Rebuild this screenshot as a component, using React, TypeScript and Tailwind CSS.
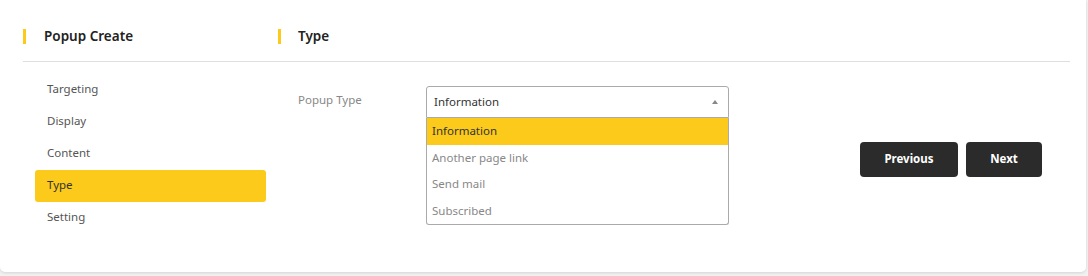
import { useState } from "react"

const steps = ["Targeting", "Display", "Content", "Type", "Setting"]
const options = ["Information", "Another page link", "Send mail", "Subscribed"]

export default function App() {
  const [active] = useState("Type")
  const [value] = useState("Information")

  return (
    <div className="h-[276px] w-[1088px] bg-[#f1f1f1] font-['Noto_Sans',sans-serif]">
      <div className="h-[272px] w-[1086px] rounded-b-[5px] bg-white pl-[23px] pr-[16px] shadow-[0_1px_3px_rgba(0,0,0,0.12)]">
        {/* Header */}
        <div className="flex h-[62px] border-b border-[#dedede] pt-[25px]">
          <div className="flex h-[22px] w-[255px] items-center">
            <span className="h-[15px] w-[3px] bg-[#fcca1a]" />
            <h2 className="ml-[18px] text-[13.5px] font-semibold text-[#222]">Popup Create</h2>
          </div>
          <div className="flex h-[22px] items-center">
            <span className="h-[15px] w-[3px] bg-[#fcca1a]" />
            <h2 className="ml-[17px] text-[13.5px] font-semibold text-[#222]">Type</h2>
          </div>
        </div>

        {/* Body */}
        <div className="flex">
          <ul className="ml-[12px] mt-[12px] w-[243px] pr-[12px]">
            {steps.map((step) => (
              <li
                key={step}
                className={`flex h-[32px] items-center rounded-[3px] px-[12px] pb-[2px] text-[11.5px] ${
                  step === active ? "bg-[#fcca1a] text-[#333]" : "text-[#555]"
                }`}
              >
                {step}
              </li>
            ))}
          </ul>

          <div className="flex flex-1 pl-[20px] pt-[24px]">
            <label className="w-[128px] pt-[6px] text-[11.5px] leading-4 text-[#888]">Popup Type</label>

            <div className="relative h-[32px] w-[303px]">
              <div className="flex h-[32px] items-center justify-between rounded-t-[3px] border border-[#aaa] pl-[7px] pr-[10px] text-[11.5px] text-[#333]">
                <span>{value}</span>
                <span className="mt-[-1px] h-0 w-0 border-x-[3.5px] border-b-[4px] border-x-transparent border-b-[#888]" />
              </div>
              <ul className="absolute left-0 top-full w-full rounded-b-[3px] border border-t-0 border-[#aaa] bg-white">
                {options.map((opt) => (
                  <li
                    key={opt}
                    className={`flex h-[26.5px] items-center px-[5px] pb-[1px] text-[11.5px] ${
                      opt === value ? "bg-[#fcca1a] text-[#333]" : "text-[#888]"
                    }`}
                  >
                    {opt}
                  </li>
                ))}
              </ul>
            </div>

            <div className="ml-auto mr-[28px] mt-[56px] flex gap-[8px]">
              <button className="h-[35px] w-[98px] rounded-[4px] bg-[#2b2b2b] pb-[2px] text-[11.5px] font-bold text-white">
                Previous
              </button>
              <button className="h-[35px] w-[76px] rounded-[4px] bg-[#2b2b2b] pb-[2px] text-[11.5px] font-bold text-white">
                Next
              </button>
            </div>
          </div>
        </div>
      </div>
    </div>
  )
}
